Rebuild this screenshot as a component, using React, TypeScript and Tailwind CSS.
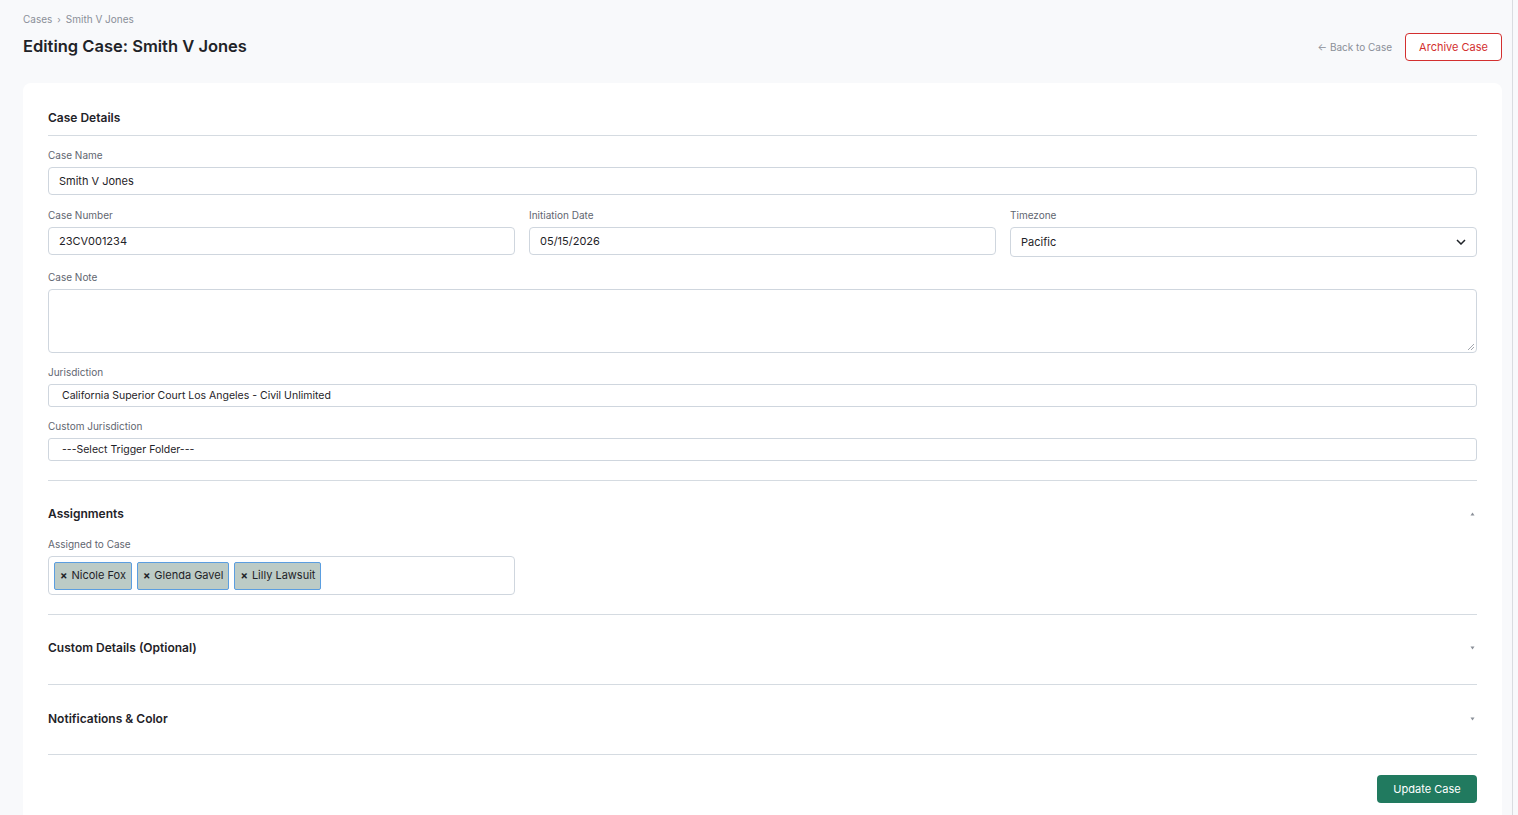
import React from 'react';

const font = { fontFamily: 'Inter, "Noto Sans", sans-serif' };

function Label({ children }: { children: React.ReactNode }) {
  return <div className="text-[10px] text-[#5f6670] mb-[5px] leading-[13px]">{children}</div>;
}

function TextInput({ value }: { value: string }) {
  return (
    <div className="h-[28px] border border-[#cfd6de] rounded-[4px] bg-white px-[10px] flex items-center text-[11px] text-[#1f2328]">
      {value}
    </div>
  );
}

function Caret({ up }: { up?: boolean }) {
  return (
    <svg width="5" height="4" viewBox="0 0 5 4" className="text-[#8a8f98]">
      {up ? <path d="M2.5 0.5 L4.5 3.5 L0.5 3.5 Z" fill="currentColor" /> : <path d="M0.5 0.5 L4.5 0.5 L2.5 3.5 Z" fill="currentColor" />}
    </svg>
  );
}

function SectionHeader({ title, up, noCaret }: { title: string; up?: boolean; noCaret?: boolean }) {
  return (
    <div className="flex items-center justify-between pr-[2px]">
      <h2 className="text-[12px] font-semibold text-[#1f2328]">{title}</h2>
      {!noCaret && <Caret up={up} />}
    </div>
  );
}

function Chip({ name }: { name: string }) {
  return (
    <span className="h-[28px] flex items-center gap-[4px] px-[5px] bg-[#bccbc6] border border-[#5b9ee0] rounded-[2px] text-[11px] text-[#1f2328]">
      <span className="text-[11px] font-bold leading-none">×</span>
      {name}
    </span>
  );
}

export default function App() {
  return (
    <div className="h-[815px] overflow-hidden flex bg-[#f8f9fb]" style={font}>
      <div className="flex-1 pl-[23px] pr-[10px] flex flex-col">
        <div className="flex items-end justify-between pt-[13px] pb-[26px]">
          <div>
            <div className="text-[10px] text-[#8a8f98] flex items-center gap-[5px] leading-[13px]">
              <span>Cases</span>
              <span className="text-[9px]">›</span>
              <span>Smith V Jones</span>
            </div>
            <h1 className="mt-[9px] text-[16.5px] font-semibold text-[#1f2328] leading-[22px]">Editing Case: Smith V Jones</h1>
          </div>
          <div className="flex items-center gap-[13px] -mb-[4px]">
            <span className="text-[10px] text-[#8a8f98]">← Back to Case</span>
            <button className="h-[28px] px-[13px] border border-[#d32f2f] rounded-[4px] text-[11px] text-[#d32f2f] bg-white">
              Archive Case
            </button>
          </div>
        </div>

        <div className="flex-1 bg-white rounded-t-[8px] px-[25px] pt-[26px]">
          <SectionHeader title="Case Details" noCaret />
          <div className="border-b border-[#d5dbe1] mt-[8px]" />

          <div className="mt-[13px]">
            <Label>Case Name</Label>
            <TextInput value="Smith V Jones" />
          </div>

          <div className="mt-[14px] grid grid-cols-3 gap-[14px]">
            <div>
              <Label>Case Number</Label>
              <TextInput value="23CV001234" />
            </div>
            <div>
              <Label>Initiation Date</Label>
              <TextInput value="05/15/2026" />
            </div>
            <div>
              <Label>Timezone</Label>
              <div className="h-[30px] border border-[#cfd6de] rounded-[4px] bg-white px-[10px] flex items-center justify-between text-[11px] text-[#1f2328]">
                <span>Pacific</span>
                <svg width="10" height="6" viewBox="0 0 10 6" fill="none" stroke="#1f2328" strokeWidth="1.5">
                  <path d="M1 1 L5 5 L9 1" />
                </svg>
              </div>
            </div>
          </div>

          <div className="mt-[14px]">
            <Label>Case Note</Label>
            <div className="h-[64px] border border-[#cfd6de] rounded-[4px] bg-white relative">
              <svg width="6" height="6" viewBox="0 0 6 6" className="absolute right-[2px] bottom-[2px]" stroke="#8a8f98" strokeWidth="0.8">
                <path d="M0 6 L6 0 M3 6 L6 3" />
              </svg>
            </div>
          </div>

          <div className="mt-[13px]">
            <Label>Jurisdiction</Label>
            <div className="h-[23px] border border-[#cfd6de] rounded-[3px] bg-white px-[13px] flex items-center text-[10.5px] text-[#1f2328]">
              California Superior Court Los Angeles - Civil Unlimited
            </div>
          </div>

          <div className="mt-[13px]">
            <Label>Custom Jurisdiction</Label>
            <div className="h-[23px] border border-[#cfd6de] rounded-[3px] bg-white px-[13px] flex items-center text-[10.5px] text-[#1f2328]">
              ---Select Trigger Folder---
            </div>
          </div>

          <div className="border-b border-[#d5dbe1] mt-[19px]" />

          <div className="mt-[24px]">
            <SectionHeader title="Assignments" up />
          </div>
          <div className="mt-[15px]">
            <Label>Assigned to Case</Label>
            <div className="w-[calc((100%-28px)/3)] h-[39px] border border-[#cfd6de] rounded-[4px] bg-white px-[5px] flex items-center gap-[5px]">
              <Chip name="Nicole Fox" />
              <Chip name="Glenda Gavel" />
              <Chip name="Lilly Lawsuit" />
            </div>
          </div>
          <div className="border-b border-[#d5dbe1] mt-[19px]" />

          <div className="h-[69px] flex flex-col justify-center pb-[4px]">
            <SectionHeader title="Custom Details (Optional)" />
          </div>
          <div className="border-b border-[#d5dbe1]" />

          <div className="h-[69px] flex flex-col justify-center pb-[2px]">
            <SectionHeader title="Notifications & Color" />
          </div>
          <div className="border-b border-[#d5dbe1]" />

          <div className="flex justify-end mt-[20px]">
            <button className="h-[28px] w-[100px] rounded-[4px] bg-[#217a5f] text-white text-[11px]">Update Case</button>
          </div>
        </div>
      </div>
      <div className="w-[6px] border-l border-[#d9dce0] bg-[#f8f9fb]" />
    </div>
  );
}
